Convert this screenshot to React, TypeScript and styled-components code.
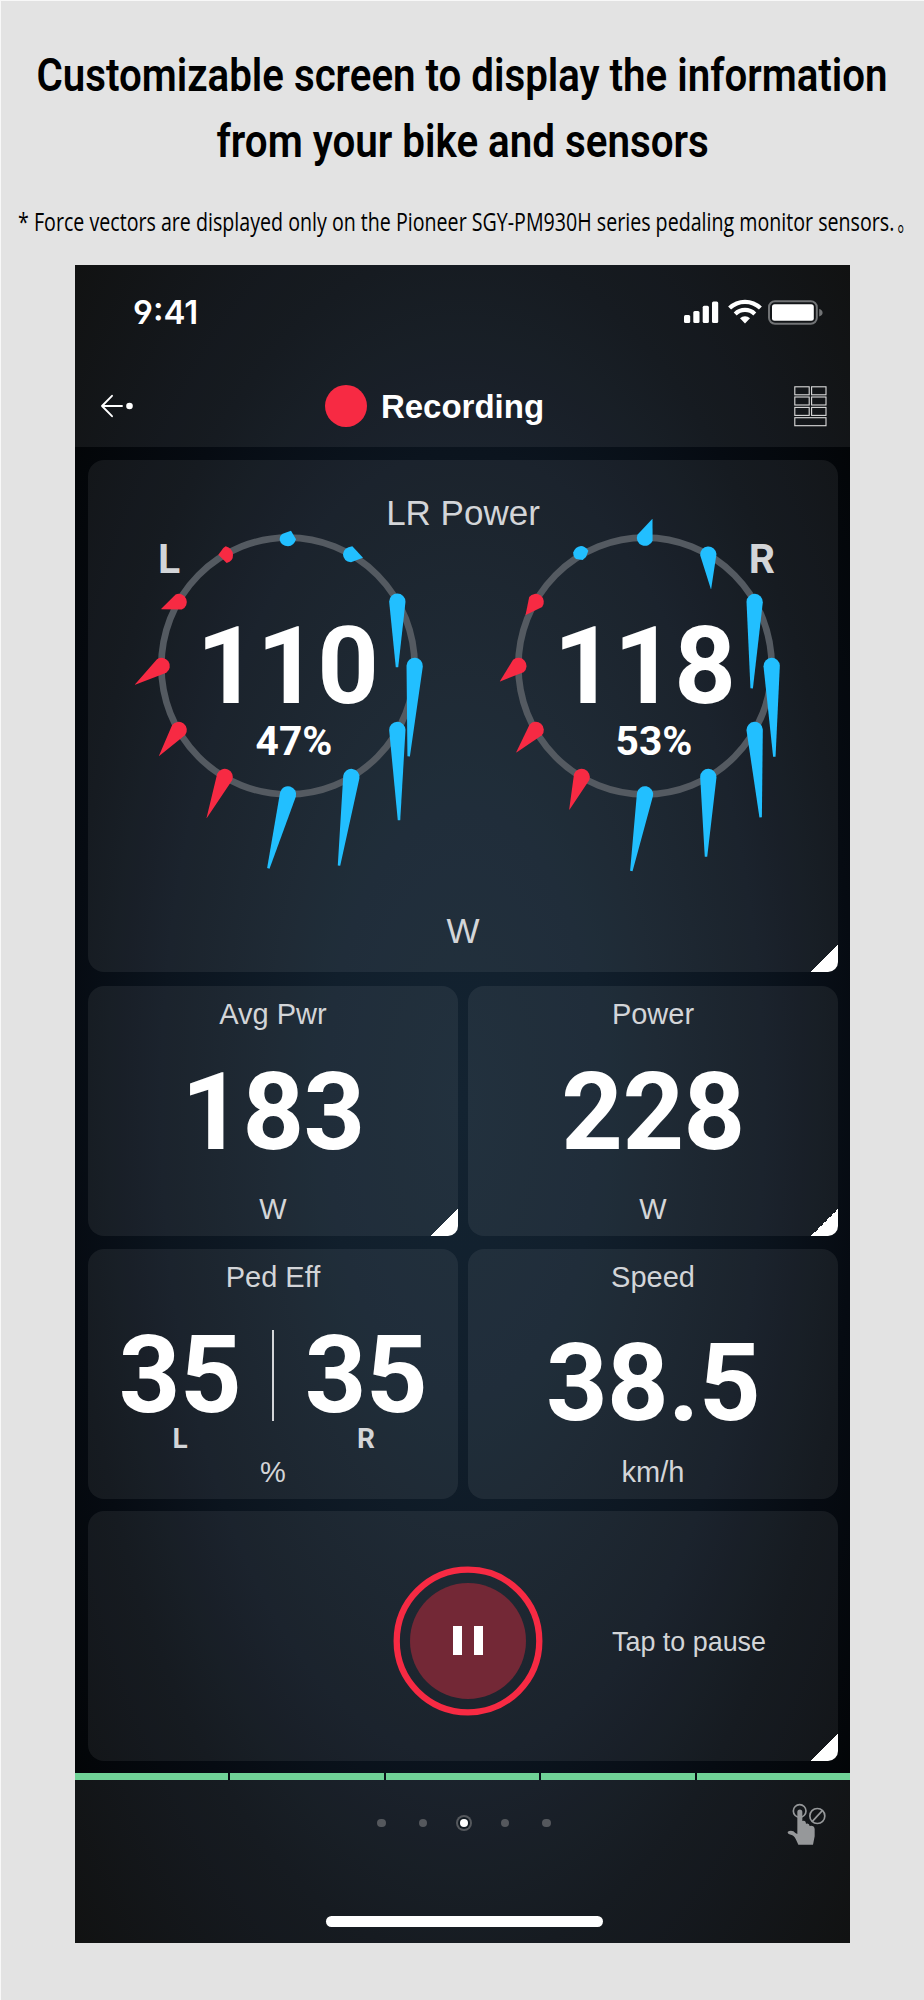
import React, { useLayoutEffect, useRef, useState } from 'react';
import styled, { createGlobalStyle } from 'styled-components';

const GlobalStyle = createGlobalStyle`
  *, *::before, *::after { box-sizing: border-box; }
  body { margin: 0; background: #e3e3e3; }
`;

const RED = '#f72a43';
const BLUE = '#22bfff';
const VEIL = 'rgba(255, 255, 255, 0.065)';
const SOFT = '#d3d5d8';

const Page = styled.main`
  width: 924px;
  height: 2000px;
  overflow: hidden;
  display: flex;
  flex-direction: column;
  align-items: center;
  background: #e3e3e3;
  border-left: 1px solid #f8f8f8;
  border-top: 1px solid #f8f8f8;
  font-family: 'Liberation Sans', Arial, sans-serif;
`;

const Intro = styled.header`
  height: 264px;
  flex: none;
  display: flex;
  flex-direction: column;
  align-items: center;
  color: #000;
`;

const Heading = styled.h1`
  margin: 42px 0 0;
  display: flex;
  flex-direction: column;
  align-items: center;
  font-family: Roboto, 'Liberation Sans', sans-serif;
  font-size: 45.5px;
  font-weight: 600;
  line-height: 66px;
`;

const Note = styled.p`
  margin: 28px 0 0 7px;
  display: flex;
  gap: 3px;
  font-family: 'Open Sans', 'Noto Sans CJK JP', sans-serif;
  font-size: 25.5px;
  line-height: 36px;
`;

const FitBox = styled.span<{ $width: number }>`
  display: flex;
  justify-content: center;
  width: ${(p) => p.$width}px;
  white-space: nowrap;
`;

const FitText = styled.span`
  flex: none;
  display: inline-block;
`;

/* Condenses a line of text so that it spans exactly the given width. */
function Condensed({ width, children }: { width: number; children: React.ReactNode }) {
  const ref = useRef<HTMLSpanElement>(null);
  const [scale, setScale] = useState(1);
  useLayoutEffect(() => {
    if (ref.current) setScale(width / ref.current.offsetWidth);
  }, [width]);
  return (
    <FitBox $width={width}>
      <FitText ref={ref} style={{ transform: `scaleX(${scale})` }}>
        {children}
      </FitText>
    </FitBox>
  );
}

const Phone = styled.section`
  width: 775px;
  height: 1678px;
  flex: none;
  display: flex;
  flex-direction: column;
  color: #fff;
  background: radial-gradient(
    ellipse farthest-corner at 50% 50%,
    #132331 0%,
    #111f2c 25%,
    #0b141e 55%,
    #060b12 72%,
    #010202 100%
  );
`;

const TopArea = styled.div`
  height: 182px;
  flex: none;
  background: ${VEIL};
`;

const StatusBar = styled.div`
  height: 94px;
  padding: 0 26px 0 58px;
  display: flex;
  justify-content: space-between;
  align-items: center;
`;

const Clock = styled.time`
  font-family: Inter, sans-serif;
  font-size: 33px;
  font-weight: 600;
  line-height: 40px;
  font-feature-settings: 'cv04';
`;

const StatusIcons = styled.svg`
  width: 142px;
  height: 28px;
  display: block;
`;

const NavBar = styled.div`
  height: 88px;
  padding: 6px 23px 0 25px;
  display: grid;
  grid-template-columns: 40px 1fr 33px;
  align-items: center;
`;

const Title = styled.h2`
  margin: 0 0 0 -65px;
  display: flex;
  align-items: center;
  justify-content: center;
  gap: 14px;
  font-size: 33px;
  font-weight: 700;
  line-height: 42px;
`;

const TitleText = styled.span`
  padding-top: 2px;
`;

const RecordDot = styled.span`
  width: 42px;
  height: 42px;
  border-radius: 50%;
  background: ${RED};
`;

const Grid = styled.div`
  height: 1326px;
  flex: none;
  padding: 13px 12px 0 13px;
  display: grid;
  grid-template-columns: 370px 370px;
  grid-template-rows: 513.5px 250px 250px 250px;
  column-gap: 10px;
  row-gap: 12.5px;
  align-content: start;
`;

const Card = styled.article<{ $wide?: boolean; $corner?: boolean }>`
  position: relative;
  grid-column: ${(p) => (p.$wide ? 'span 2' : 'auto')};
  border-radius: 16px;
  background: ${VEIL};
  &::after {
    content: ${(p) => (p.$corner ? "''" : 'none')};
    position: absolute;
    right: 0;
    bottom: 0;
    width: 27px;
    height: 27px;
    border-bottom-right-radius: 10px;
    background: linear-gradient(135deg, transparent 50%, #fff 50%);
  }
`;

const Tile = styled(Card)`
  display: flex;
  flex-direction: column;
  align-items: center;
  padding: 13px 0 12px;
`;

const Caption = styled.div`
  font-size: 29px;
  line-height: 30px;
  color: ${SOFT};
`;

const Body = styled.div<{ $shift?: number }>`
  flex: 1;
  min-height: 0;
  display: flex;
  align-items: center;
  padding-top: ${(p) => p.$shift ?? 0}px;
`;

const Value = styled.div<{ $tight?: boolean }>`
  font-family: Roboto, sans-serif;
  font-size: 107.5px;
  font-weight: 700;
  line-height: 90px;
  letter-spacing: ${(p) => (p.$tight ? -1.3 : -0.5)}px;
  margin-left: ${(p) => (p.$tight ? -2 : 0)}px;
`;

const Side = styled.div`
  width: 184px;
  display: flex;
  flex-direction: column;
  align-items: center;
  gap: 4px;
`;

const SideLabel = styled.div`
  font-family: Roboto, sans-serif;
  font-size: 28px;
  font-weight: 700;
  line-height: 30px;
  color: ${SOFT};
`;

const Rule = styled.div`
  width: 2px;
  height: 91px;
  margin-bottom: 33px;
  background: ${SOFT};
`;

const PowerCard = styled(Card)`
  display: grid;
  grid-template-rows: 1fr 42px;
  margin-bottom: 1.5px;
  padding-bottom: 20px;
`;

const PowerTitle = styled.div`
  grid-area: 1 / 1;
  justify-self: center;
  padding-top: 32px;
  font-size: 35px;
  line-height: 42px;
  color: ${SOFT};
`;

const PowerUnit = styled.div`
  text-align: center;
  font-size: 35px;
  line-height: 42px;
  color: ${SOFT};
`;

const Gauges = styled.div`
  grid-area: 1 / 1;
  display: flex;
  gap: 37px;
  padding: 56px 0 0 40px;
`;

const GaugeBox = styled.div`
  display: grid;
  width: 320px;
  height: 370px;
`;

const GaugeChart = styled.svg`
  grid-area: 1 / 1;
  width: 320px;
  height: 370px;
  display: block;
`;

const GaugeText = styled.div`
  grid-area: 1 / 1;
  display: flex;
  flex-direction: column;
  align-items: center;
  padding-top: 104.5px;
`;

const Percent = styled.div<{ $shift: number }>`
  margin: 8px 0 0 ${(p) => p.$shift}px;
  font-family: Roboto, sans-serif;
  font-size: 40.7px;
  font-weight: 700;
  line-height: 44px;
`;

const GaugeSide = styled.div<{ $right?: boolean }>`
  grid-area: 1 / 1;
  justify-self: ${(p) => (p.$right ? 'end' : 'start')};
  padding: ${(p) => (p.$right ? '21px 30px 0 0' : '21px 0 0 30px')};
  font-family: Roboto, sans-serif;
  font-size: 41px;
  font-weight: 700;
  line-height: 44px;
  color: ${SOFT};
`;

const PauseCard = styled(Card)`
  display: grid;
  grid-template-columns: 1fr 150px 1fr;
  align-items: center;
  padding-top: 10px;
`;

const PauseButton = styled.button`
  grid-column: 2;
  width: 150px;
  height: 150px;
  margin-left: 5px;
  padding: 0;
  border: 0;
  background: none;
`;

const PauseText = styled.span`
  padding: 2px 0 0 74px;
  font-size: 26.9px;
  line-height: 30px;
  color: ${SOFT};
`;

const Laps = styled.div`
  height: 7px;
  flex: none;
  display: grid;
  grid-template-columns: repeat(5, 1fr);
  gap: 2px;
  span { background: #70d297; }
`;

const Footer = styled.footer`
  flex: 1;
  display: flex;
  flex-direction: column;
  justify-content: space-between;
  align-items: center;
  padding: 13px 0 16.5px;
  background: ${VEIL};
`;

const PagerRow = styled.div`
  width: 100%;
  height: 60px;
  padding-right: 14px;
  display: grid;
  grid-template-columns: 77px 1fr 60px;
  align-items: center;
`;

const Pager = styled.div`
  display: flex;
  justify-content: center;
  align-items: center;
  gap: 32.6px;
`;

const PageDot = styled.i<{ $active?: boolean }>`
  width: 8.6px;
  height: 8.6px;
  border-radius: 50%;
  background: ${(p) => (p.$active ? '#fff' : '#55585d')};
  box-shadow: ${(p) => (p.$active ? '0 0 0 2px #131b22, 0 0 0 4px #55585d' : 'none')};
`;

const HomeIndicator = styled.div`
  width: 277px;
  height: 11px;
  margin-left: 3px;
  border-radius: 5.5px;
  background: #fff;
`;

type Vector = { c: string; x: number; y: number; tx: number; ty: number };

const v = (c: string, x: number, y: number, tx: number, ty: number): Vector => ({ c, x, y, tx, ty });

const LEFT: Vector[] = [
  v(BLUE, 328, -193, 327, 4),
  v(BLUE, 380, 0, 362, 271),
  v(BLUE, 328, 192, 333, 463),
  v(BLUE, 190, 333, 153, 599),
  v(BLUE, 0, 385, -59, 607),
  v(RED, -190, 333, -244, 456),
  v(RED, -328, 192, -387, 270),
  v(RED, -379, 0, -459, 56),
  v(RED, -328, -192, -380, -171),
];

const RIGHT: Vector[] = [
  v(BLUE, 0, -385, 22, -441),
  v(BLUE, 190, -334, 198, -231),
  v(BLUE, 329, -192, 320, 67),
  v(BLUE, 380, 0, 388, 272),
  v(BLUE, 329, 192, 347, 454),
  v(BLUE, 190, 333, 183, 572),
  v(BLUE, 0, 385, -41, 615),
  v(RED, -190, 333, -227, 431),
  v(RED, -328, 192, -386, 259),
  v(RED, -380, 0, -435, 46),
  v(RED, -328, -192, -358, -153),
];

/* A round head that tapers towards the tip. */
function conePath({ x, y, tx, ty }: Vector) {
  const r = 24.5;
  const d = Math.hypot(tx - x, ty - y);
  const nx = (-(ty - y) / d) * r;
  const ny = ((tx - x) / d) * r;
  const k = d > 170 ? 0.15 : 0.02;
  return `M${x + nx} ${y + ny}A${r} ${r} 0 0 1 ${x - nx} ${y - ny}L${tx - nx * k} ${ty - ny * k}L${tx + nx * k} ${ty + ny * k}Z`;
}

function Gauge(props: {
  side: string;
  right?: boolean;
  value: string;
  percent: string;
  shift: number;
  vectors: Vector[];
  nubs: { c: string; d: string }[];
}) {
  return (
    <GaugeBox>
      <GaugeChart viewBox="-480 -450 960 1110">
        <ellipse rx="380" ry="385" fill="none" stroke="#545a61" strokeWidth="20" />
        {props.nubs.map((n) => (
          <path key={n.d} d={n.d} fill={n.c} />
        ))}
        {props.vectors.map((p) => (
          <path key={`${p.x},${p.y}`} d={conePath(p)} fill={p.c} />
        ))}
      </GaugeChart>
      <GaugeSide $right={props.right}>{props.side}</GaugeSide>
      <GaugeText>
        <Value $tight>{props.value}</Value>
        <Percent $shift={props.shift}>{props.percent}</Percent>
      </GaugeText>
    </GaugeBox>
  );
}

const BackIcon = () => (
  <svg width="36" height="24" viewBox="0 0 36 24" fill="none">
    <path d="M12 1.8L2 12L12 22.2M2 12H22" stroke="#fff" strokeWidth="1.9" strokeLinecap="round" strokeLinejoin="round" />
    <circle cx="29.5" cy="12" r="3.3" fill="#fff" />
  </svg>
);

const LayoutIcon = () => (
  <svg width="33" height="41" viewBox="0 0 33 41" fill="none" stroke="#dcdcdc" strokeWidth="1.1">
    {[0.8, 11, 21.4].map((y) => (
      <g key={y}>
        <rect x="0.8" y={y} width="14.4" height="8" />
        <rect x="17.6" y={y} width="14.4" height="8" />
      </g>
    ))}
    <rect x="0.8" y="31.7" width="31.2" height="8" />
  </svg>
);

const TouchOffIcon = () => (
  <svg width="60" height="60" viewBox="0 0 180 180">
    <circle cx="71" cy="54" r="19" fill="none" stroke="#96989a" strokeWidth="5" />
    <path
      d="M64 57a7.500 7.500 0 0 1 15 0V84q10-4 11 8q10-3 11 7q13-3 15 9V130L111 155H67L63 146Q56 130 49 127L38 123Q31 116 40 114Q52 112 58 120L64 123Z"
      fill="#96989a"
    />
    <circle cx="124" cy="69" r="22.500" fill="none" stroke="#96989a" strokeWidth="5" />
    <path d="M109 85L139 53" stroke="#96989a" strokeWidth="5" />
  </svg>
);

export default function App() {
  return (
    <>
      <GlobalStyle />
      <Page>
        <Intro>
          <Heading>
            <Condensed width={851}>Customizable screen to display the information</Condensed>
            <Condensed width={492}>from your bike and sensors</Condensed>
          </Heading>
          <Note>
            <Condensed width={876}>
              * Force vectors are displayed only on the Pioneer SGY-PM930H series pedaling monitor sensors.
            </Condensed>
            <Condensed width={17}>。</Condensed>
          </Note>
        </Intro>

        <Phone>
          <TopArea>
            <StatusBar>
              <Clock>9:41</Clock>
              <StatusIcons viewBox="0 0 142 28">
                <g fill="#fff">
                  <rect x="2" y="17" width="6.200" height="8" rx="1.500" />
                  <rect x="11.300" y="13" width="6.200" height="12" rx="1.500" />
                  <rect x="20.700" y="7.800" width="6.200" height="17.200" rx="1.500" />
                  <rect x="30" y="3.500" width="6.200" height="21.500" rx="1.500" />
                  <path d="M63 25.500L68 20.300A7.200 7.200 0 0 0 58 20.300Z" />
                </g>
                <path d="M47.600 10.100A22 22 0 0 1 78.400 10.100M53.200 15.900A14 14 0 0 1 72.800 15.900" fill="none" stroke="#fff" strokeWidth="4.200" />
                <rect x="87" y="3.300" width="47.800" height="22.400" rx="6" fill="none" stroke="#717375" strokeWidth="2" />
                <rect x="90" y="6.300" width="41.800" height="16.400" rx="2.500" fill="#fff" />
                <path d="M137.200 11q3.400 1 3.400 3.700t-3.400 3.700Z" fill="#717375" />
              </StatusIcons>
            </StatusBar>
            <NavBar>
              <BackIcon />
              <Title>
                <RecordDot />
                <TitleText>Recording</TitleText>
              </Title>
              <LayoutIcon />
            </NavBar>
          </TopArea>

          <Grid>
            <PowerCard $wide $corner>
              <PowerTitle>LR Power</PowerTitle>
              <Gauges>
                <Gauge
                  side="L"
                  value="110"
                  percent="47%"
                  shift={12}
                  vectors={LEFT}
                  nubs={[
                    { c: BLUE, d: 'M-25 -378Q-25 -393 -16 -397L9 -406L24 -380Q18 -360 0 -359Q-20 -360 -25 -378Z' },
                    { c: BLUE, d: 'M193 -359L225 -325L189 -311Q166 -314 165 -335Q167 -356 193 -359Z' },
                    { c: RED, d: 'M-187 -359Q-167 -354 -165 -334Q-164 -315 -184 -309L-209 -334L-194 -354Z' },
                  ]}
                />
                <Gauge
                  side="R"
                  right
                  value="118"
                  percent="53%"
                  shift={18}
                  vectors={RIGHT}
                  nubs={[
                    { c: BLUE, d: 'M-192 -360Q-180 -360 -170 -346L-177 -327L-187 -318L-207 -321Q-217 -330 -215 -341Q-210 -357 -192 -360Z' },
                  ]}
                />
              </Gauges>
              <PowerUnit>W</PowerUnit>
            </PowerCard>

            <Tile $corner>
              <Caption>Avg Pwr</Caption>
              <Body><Value>183</Value></Body>
              <Caption>W</Caption>
            </Tile>
            <Tile $corner>
              <Caption>Power</Caption>
              <Body><Value>228</Value></Body>
              <Caption>W</Caption>
            </Tile>
            <Tile>
              <Caption>Ped Eff</Caption>
              <Body $shift={36}>
                <Side><Value>35</Value><SideLabel>L</SideLabel></Side>
                <Rule />
                <Side><Value>35</Value><SideLabel>R</SideLabel></Side>
              </Body>
              <Caption>%</Caption>
            </Tile>
            <Tile>
              <Caption>Speed</Caption>
              <Body $shift={18}><Value>38.5</Value></Body>
              <Caption>km/h</Caption>
            </Tile>

            <PauseCard $wide $corner>
              <PauseButton aria-label="Pause">
                <svg width="150" height="150" viewBox="0 0 150 150">
                  <circle cx="75" cy="75" r="71.300" fill="none" stroke={RED} strokeWidth="6.300" />
                  <circle cx="75" cy="75" r="58" fill="#732836" />
                  <path d="M60 60h9v29h-9zM81 60h9v29h-9z" fill="#fff" />
                </svg>
              </PauseButton>
              <PauseText>Tap to pause</PauseText>
            </PauseCard>
          </Grid>

          <Laps><span /><span /><span /><span /><span /></Laps>

          <Footer>
            <PagerRow>
              <span />
              <Pager>
                <PageDot />
                <PageDot />
                <PageDot $active />
                <PageDot />
                <PageDot />
              </Pager>
              <TouchOffIcon />
            </PagerRow>
            <HomeIndicator />
          </Footer>
        </Phone>
      </Page>
    </>
  );
}
